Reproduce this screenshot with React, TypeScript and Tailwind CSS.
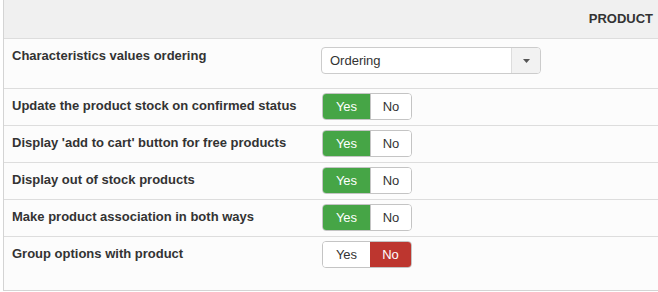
const rows: { label: string; value: boolean }[] = [
  { label: "Update the product stock on confirmed status", value: true },
  { label: "Display 'add to cart' button for free products", value: true },
  { label: "Display out of stock products", value: true },
  { label: "Make product association in both ways", value: true },
  { label: "Group options with product", value: false },
]

function YesNo({ value }: { value: boolean }) {
  return (
    <div className="mt-[4px] flex h-[27px] w-[90px] overflow-hidden rounded-[4px] border border-[#c4c4c4] text-[13px]">
      <div
        className={
          value
            ? "flex w-[47px] items-center justify-center bg-[#46a546] text-white"
            : "flex w-[47px] items-center justify-center bg-white text-[#333]"
        }
      >
        Yes
      </div>
      <div
        className={
          value
            ? "flex flex-1 items-center justify-center border-l border-[#c4c4c4] bg-white text-[#333]"
            : "flex flex-1 items-center justify-center bg-[#bd362f] text-white"
        }
      >
        No
      </div>
    </div>
  )
}

export default function App() {
  return (
    <div className="h-[292px] w-[658px] overflow-hidden bg-white font-['Liberation_Sans',Arial,sans-serif] text-[#333]">
      <div className="ml-[3px] h-[291px] border-b border-l border-[#d4d4d4] bg-[#fcfcfc]">
        {/* Header */}
        <div className="flex h-[39px] items-center justify-end border-b border-[#dddddd] bg-[#f0f0f0] pr-[5px] text-[13px] font-bold">
          PRODUCT
        </div>

        {/* Ordering select */}
        <div className="flex h-[50px] border-b border-[#dddddd]">
          <div className="w-[317px] pl-[8px] pt-[8px] text-[13px] leading-[18px] font-bold">
            Characteristics values ordering
          </div>
          <div className="pt-[8px]">
            <div className="flex h-[27px] w-[220px] overflow-hidden rounded-[4px] border border-[#cccccc] bg-white text-[13px]">
              <div className="flex flex-1 items-center pl-[8px]">Ordering</div>
              <div className="flex w-[29px] items-center justify-center border-l border-[#dddddd] bg-[#f2f2f2]">
                <svg width="7" height="4" viewBox="0 0 7 4">
                  <path d="M0 0h7L3.5 4z" fill="#555" />
                </svg>
              </div>
            </div>
          </div>
        </div>

        {/* Yes / No rows */}
        {rows.map((row, i) => (
          <div
            key={row.label}
            className={
              i === rows.length - 1
                ? "flex h-[54px]"
                : "flex h-[37px] border-b border-[#dddddd]"
            }
          >
            <div className="w-[318px] pl-[8px] pt-[8px] text-[13px] leading-[18px] font-bold">
              {row.label}
            </div>
            <YesNo value={row.value} />
          </div>
        ))}
      </div>
    </div>
  )
}
